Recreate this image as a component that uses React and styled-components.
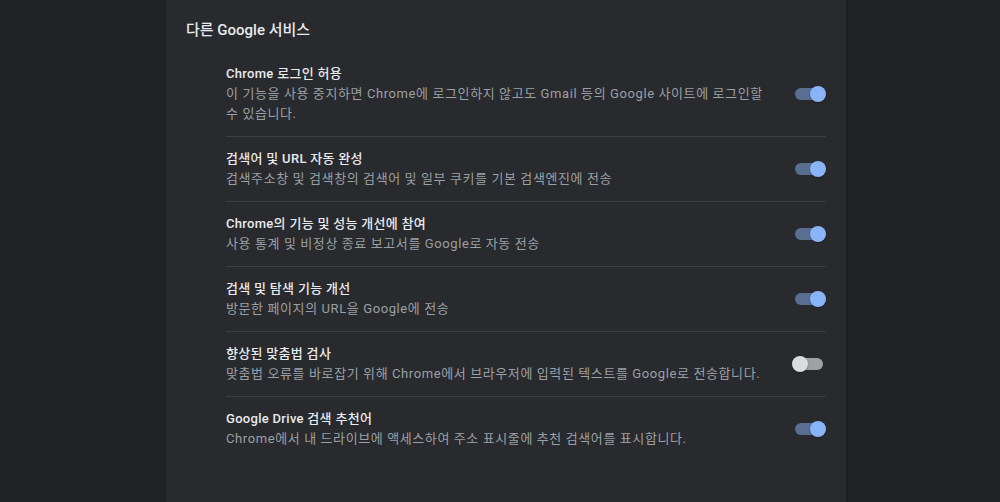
import React, { useState } from 'react'
import styled, { createGlobalStyle } from 'styled-components'

const GlobalStyle = createGlobalStyle`
    html, body {
        margin: 0;
        padding: 0;
        background: #202124;
        font-family: Roboto, "Noto Sans CJK KR", sans-serif;
    }
`;

const services = [
    {
        title: "Chrome 로그인 허용",
        desc: "이 기능을 사용 중지하면 Chrome에 로그인하지 않고도 Gmail 등의 Google 사이트에 로그인할 수 있습니다.",
        on: true
    },
    {
        title: "검색어 및 URL 자동 완성",
        desc: "검색주소창 및 검색창의 검색어 및 일부 쿠키를 기본 검색엔진에 전송",
        on: true
    },
    {
        title: "Chrome의 기능 및 성능 개선에 참여",
        desc: "사용 통계 및 비정상 종료 보고서를 Google로 자동 전송",
        on: true
    },
    {
        title: "검색 및 탐색 기능 개선",
        desc: "방문한 페이지의 URL을 Google에 전송",
        on: true
    },
    {
        title: "향상된 맞춤법 검사",
        desc: "맞춤법 오류를 바로잡기 위해 Chrome에서 브라우저에 입력된 텍스트를 Google로 전송합니다.",
        on: false
    },
    {
        title: "Google Drive 검색 추천어",
        desc: "Chrome에서 내 드라이브에 액세스하여 주소 표시줄에 추천 검색어를 표시합니다.",
        on: true
    }
];

function Toggle({ checked, onClick }) {
    return (
        <Switch role="switch" aria-checked={checked} onClick={onClick}>
            <Bar $on={checked} />
            <Knob $on={checked} />
        </Switch>
    )
}

function App() {
    const [items, setItems] = useState(services);

    function flip(i) {
        setItems(items.map((it, idx) => idx === i ? { ...it, on: !it.on } : it));
    }

    return (
        <Page>
            <GlobalStyle />
            <Card>
                <Heading>다른 Google 서비스</Heading>
                <List>
                    {items.map((it, i) => (
                        <Row key={it.title}>
                            <Text>
                                <Title>{it.title}</Title>
                                <Desc>{it.desc}</Desc>
                            </Text>
                            <Toggle checked={it.on} onClick={() => flip(i)} />
                        </Row>
                    ))}
                </List>
            </Card>
        </Page>
    )
}

const Page = styled.div`
    min-height: 502px;
    display: flex;
    justify-content: center;
    padding-left: 12px;
`;

const Card = styled.div`
    width: 680px;
    min-height: 502px;
    background: #292a2d;
    box-shadow: 0 0 2px rgba(0, 0, 0, 0.4);
    box-sizing: border-box;
    padding: 20px 20px 0 20px;
`;

const Heading = styled.h2`
    margin: 0 0 12px 0;
    font-size: 15px;
    line-height: 20px;
    font-weight: 500;
    color: #e8eaed;
`;

const List = styled.div`
    padding-left: 40px;
`;

const Row = styled.div`
    display: flex;
    align-items: center;
    padding: 12px 0 12px 0;
    & + & {
        border-top: 1px solid rgba(255, 255, 255, 0.1);
    }
`;

const Text = styled.div`
    flex: 1;
    padding-right: 24px;
`;

const Title = styled.div`
    font-size: 13px;
    line-height: 20px;
    height: 20px;
    font-weight: 500;
    letter-spacing: 0.3px;
    color: #e8eaed;
`;

const Desc = styled.div`
    font-size: 13px;
    line-height: 20px;
    letter-spacing: 0.6px;
    color: #9aa0a6;
`;

const Switch = styled.div`
    position: relative;
    width: 34px;
    height: 16px;
    flex-shrink: 0;
    cursor: pointer;
`;

const Bar = styled.span`
    position: absolute;
    left: 3px;
    top: 2px;
    width: 28px;
    height: 12px;
    border-radius: 6px;
    background: ${p => p.$on ? '#596f92' : '#9ea1a6'};
`;

const Knob = styled.span`
    position: absolute;
    top: 0;
    left: ${p => p.$on ? '18px' : '0'};
    width: 16px;
    height: 16px;
    border-radius: 50%;
    background: ${p => p.$on ? '#8ab4f8' : '#dadce0'};
    box-shadow: 0 1px 2px rgba(0, 0, 0, 0.3);
`;

export default App
